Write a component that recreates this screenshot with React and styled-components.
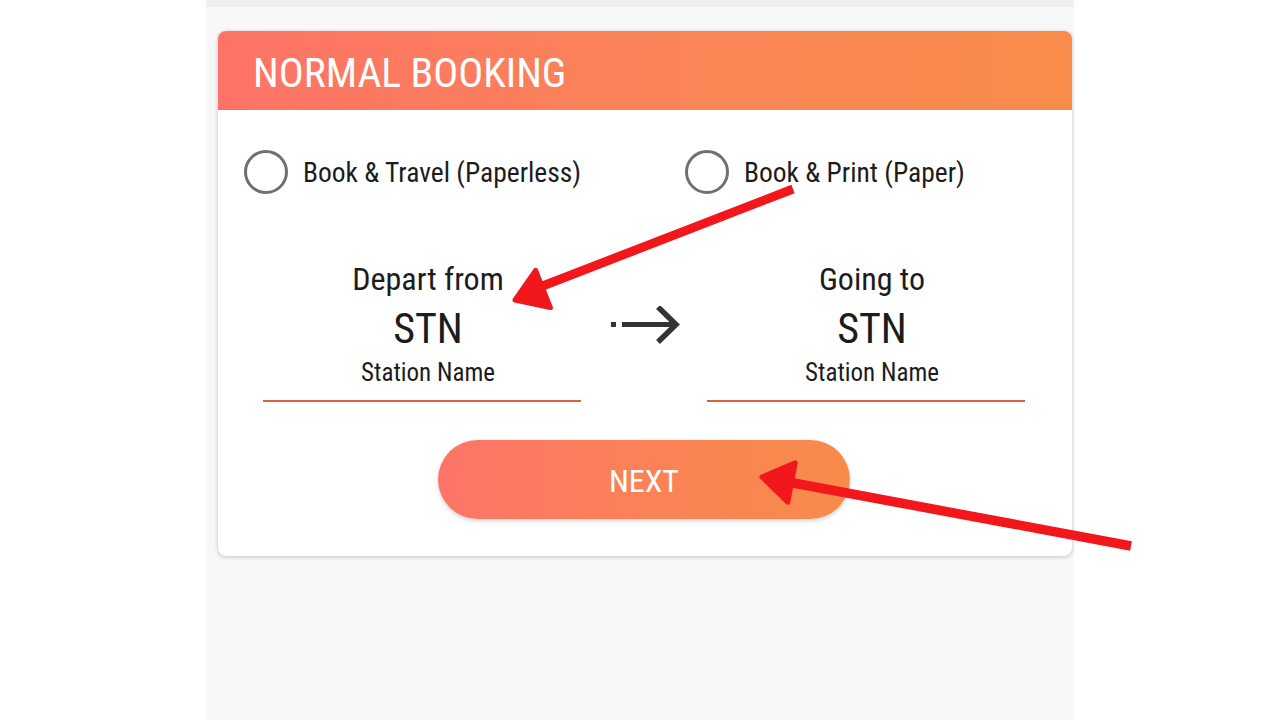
import React from 'react';
import styled, { createGlobalStyle } from 'styled-components';

const GlobalStyle = createGlobalStyle`
  * { box-sizing: border-box; }
  body {
    margin: 0;
    background: #ffffff;
    font-family: "Roboto Condensed", Roboto, "Liberation Sans", sans-serif;
    font-stretch: condensed;
    color: #1c1c1c;
  }
`;

const Page = styled.div`
  position: relative;
  width: 1280px;
  height: 720px;
  display: flex;
  justify-content: center;
  overflow: hidden;
`;

const Column = styled.div`
  width: 868px;
  background: #f8f8f8;
  border-top: 7px solid #efefef;
  padding: 24px 2px 0 12px;
`;

const Card = styled.div`
  background: #ffffff;
  border-radius: 8px;
  overflow: hidden;
  box-shadow: 0 1px 4px rgba(0, 0, 0, 0.22);
  padding-bottom: 37px;
`;

const Header = styled.div`
  height: 79px;
  display: flex;
  align-items: center;
  padding-left: 35px;
  background: linear-gradient(90deg, #fd7367 0%, #fa8556 55%, #f98c4b 100%);
  color: #ffffff;
  font-size: 41.5px;
  padding-top: 3px;
`;

const RadioRow = styled.div`
  display: grid;
  grid-template-columns: 441px 1fr;
  padding-left: 26px;
  margin-top: 40px;
`;

const RadioOption = styled.label`
  display: flex;
  align-items: center;
  gap: 15px;
  font-size: 27.5px;
`;

const Circle = styled.span`
  width: 44px;
  height: 44px;
  border-radius: 50%;
  border: 3.5px solid #707070;
  flex: none;
`;

const StationRow = styled.div`
  display: flex;
  align-items: flex-start;
  padding: 0 47px 0 45px;
  margin-top: 66px;
`;

const Field = styled.div`
  width: 318px;
  display: flex;
  flex-direction: column;
  align-items: center;
  border-bottom: 2px solid #d8633f;
  padding: 0 0 12px 12px;
`;

const FieldLabel = styled.div`
  font-size: 32px;
  line-height: 38px;
`;

const Code = styled.div`
  font-size: 42px;
  line-height: 48px;
  margin-top: 7px;
`;

const StationName = styled.div`
  font-size: 25px;
  line-height: 30px;
  margin-top: 5px;
`;

const Middle = styled.div`
  width: 126px;
  display: flex;
  justify-content: center;
  padding: 46px 0 0 3px;
`;

const ButtonWrap = styled.div`
  display: flex;
  justify-content: center;
  margin-top: 38px;
`;

const NextButton = styled.button`
  width: 412px;
  height: 79px;
  margin-left: -2px;
  border: none;
  border-radius: 40px;
  background: linear-gradient(90deg, #fd7468 0%, #fa8257 50%, #f88b4a 100%);
  box-shadow: 0 2px 4px rgba(0, 0, 0, 0.18);
  color: #ffffff;
  font-family: inherit;
  font-stretch: condensed;
  font-size: 32px;
  padding-top: 3px;
  cursor: pointer;
`;

const Overlay = styled.svg`
  position: absolute;
  top: 0;
  left: 0;
  pointer-events: none;
`;

const ArrowIcon = () => (
  <svg width="70" height="38" viewBox="0 0 70 38">
    <rect x="0" y="16" width="5" height="5" fill="#333" />
    <line x1="11" y1="18.5" x2="65" y2="18.5" stroke="#333" strokeWidth="5" />
    <polyline points="47,1 65,18.5 47,36" fill="none" stroke="#333" strokeWidth="5.5" />
  </svg>
);

const Station = ({ label }) => (
  <Field>
    <FieldLabel>{label}</FieldLabel>
    <Code>STN</Code>
    <StationName>Station Name</StationName>
  </Field>
);

const RED = '#f1171b';

const App = () => {
  return (
    <>
      <GlobalStyle />
      <Page>
        <Column>
          <Card>
            <Header>NORMAL BOOKING</Header>
            <RadioRow>
              <RadioOption>
                <Circle />
                Book &amp; Travel (Paperless)
              </RadioOption>
              <RadioOption>
                <Circle />
                Book &amp; Print (Paper)
              </RadioOption>
            </RadioRow>
            <StationRow>
              <Station label="Depart from" />
              <Middle>
                <ArrowIcon />
              </Middle>
              <Station label="Going to" />
            </StationRow>
            <ButtonWrap>
              <NextButton>NEXT</NextButton>
            </ButtonWrap>
          </Card>
        </Column>
        <Overlay width="1280" height="720" viewBox="0 0 1280 720">
          <line x1="793" y1="189" x2="540" y2="287" stroke={RED} strokeWidth="9" />
          <polygon
            points="515,300 535.6,270.4 550.4,307.6"
            fill={RED}
            stroke={RED}
            strokeWidth="5"
            strokeLinejoin="round"
          />
          <line x1="1131" y1="546" x2="788" y2="482" stroke={RED} strokeWidth="9.5" />
          <polygon
            points="762,477 795.2,462.8 787.8,502.2"
            fill={RED}
            stroke={RED}
            strokeWidth="5"
            strokeLinejoin="round"
          />
        </Overlay>
      </Page>
    </>
  );
};

export default App;
